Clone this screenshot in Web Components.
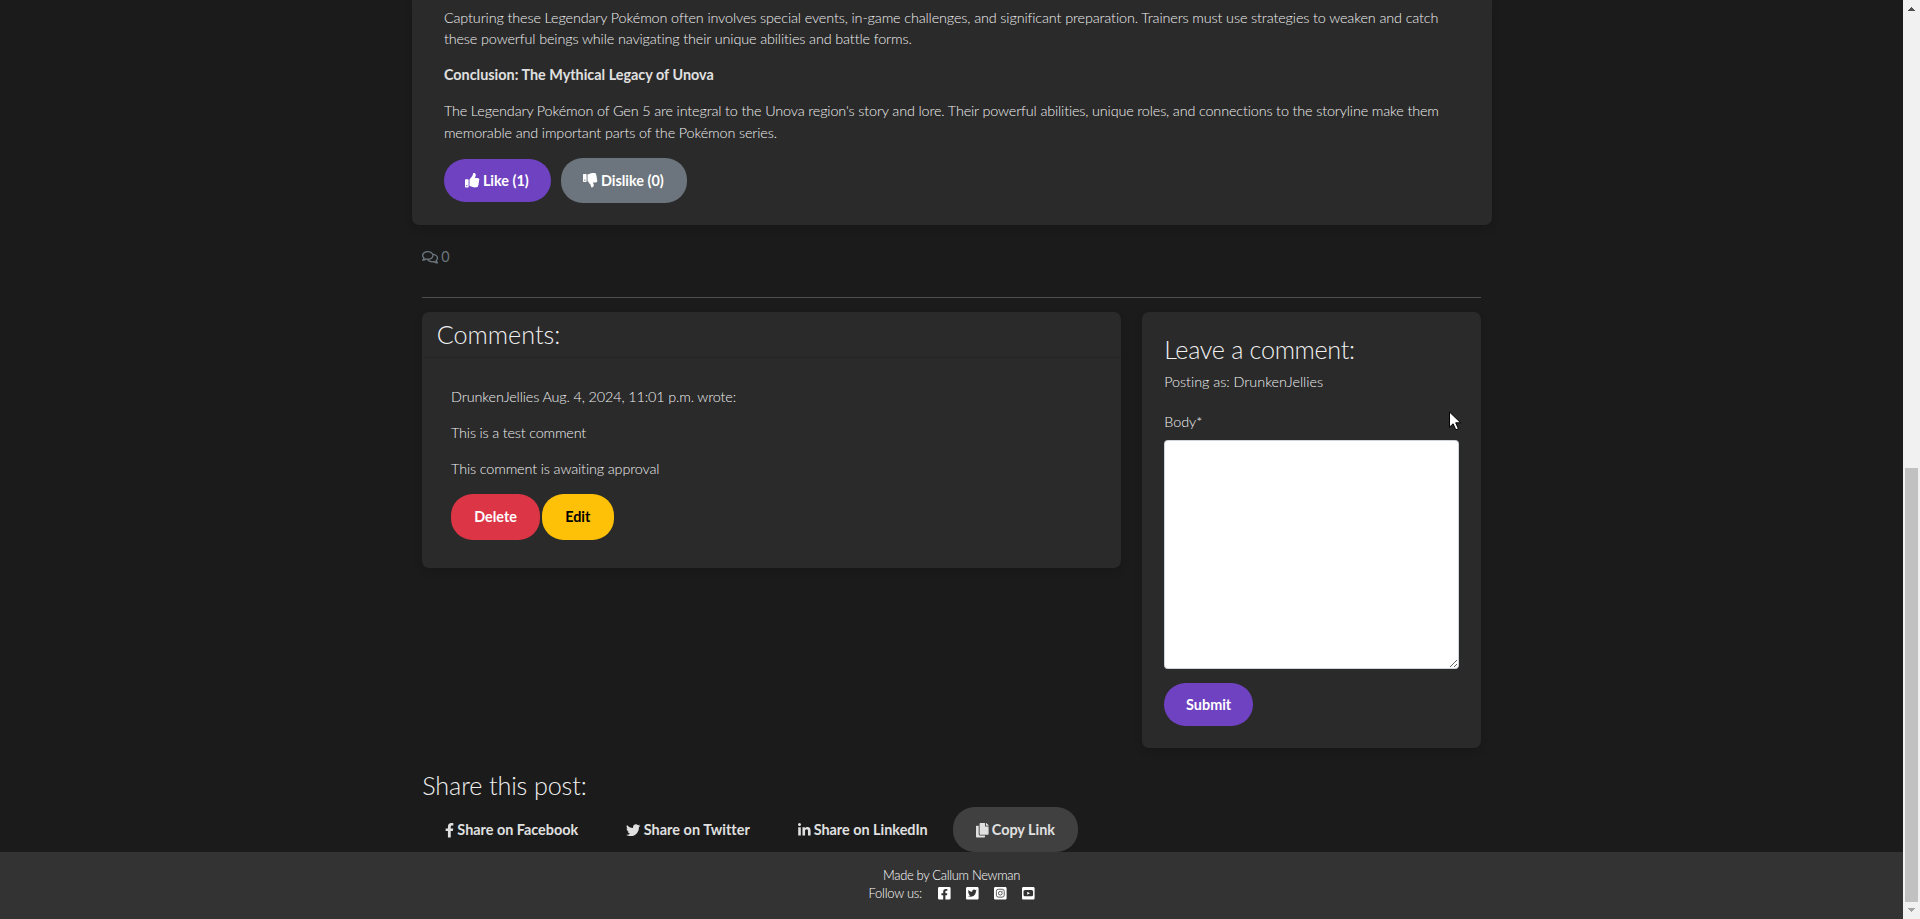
<!DOCTYPE html>
<html lang="en">
<head>
<meta charset="utf-8">
<title>Blog post</title>
<style>
html{font-size:14.4px}
body{margin:0;height:919px;overflow:hidden;background:#1b1b1b;color:#f0f0f0;font:300 14.4px/21.6px Lato,"Liberation Sans",sans-serif}
</style>
</head>
<body>
<blog-page></blog-page>
<script>
const square = 'M400 32H48C21.5 32 0 53.5 0 80v352c0 26.5 21.5 48 48 48h352c26.5 0 48-21.5 48-48V80c0-26.5-21.5-48-48-48z';
const ICONS = {
  up:[512,'M104 224H24c-13.255 0-24 10.745-24 24v240c0 13.255 10.745 24 24 24h80c13.255 0 24-10.745 24-24V248c0-13.255-10.745-24-24-24zM64 472c-13.255 0-24-10.745-24-24s10.745-24 24-24 24 10.745 24 24-10.745 24-24 24zM384 81.452c0 42.416-25.97 66.208-33.277 94.548h101.723c33.397 0 59.397 27.746 59.553 58.098.084 17.938-7.546 37.249-19.439 49.197l-.11.11c9.836 23.337 8.237 56.037-9.308 79.469 8.681 25.895-.069 57.704-16.382 74.757 4.298 17.598 2.244 32.575-6.148 44.632C440.202 511.587 389.616 512 346.839 512l-2.845-.001c-48.287-.017-87.806-17.598-119.56-31.725-15.957-7.099-36.821-15.887-52.651-16.178-6.54-.12-11.783-5.457-11.783-11.998v-213.77c0-3.2 1.282-6.271 3.558-8.521 39.614-39.144 56.648-80.587 89.117-113.111 14.804-14.832 20.188-37.236 25.393-58.902C282.515 39.293 291.817 0 312 0c24 0 72 8 72 81.452z'],
  down:[512,'M0 56v240c0 13.255 10.745 24 24 24h80c13.255 0 24-10.745 24-24V56c0-13.255-10.745-24-24-24H24C10.745 32 0 42.745 0 56zm40 200c0-13.255 10.745-24 24-24s24 10.745 24 24-10.745 24-24 24-24-10.745-24-24zm272 256c-20.183 0-29.485-39.293-33.931-57.795-5.206-21.666-10.589-44.07-25.393-58.902-32.469-32.524-49.503-73.967-89.117-113.111a11.98 11.98 0 0 1-3.558-8.521V59.901c0-6.541 5.243-11.878 11.783-11.998 15.831-.29 36.694-9.079 52.651-16.178C256.189 17.598 295.709.017 343.995 0h2.844c42.777 0 93.363.413 113.774 29.737 8.392 12.057 10.446 27.034 6.148 44.632 16.312 17.053 25.063 48.863 16.382 74.757 17.544 23.432 19.143 56.132 9.308 79.469l.11.11c11.893 11.949 19.523 31.259 19.439 49.197-.156 30.352-26.157 58.098-59.553 58.098H350.723C358.03 364.34 384 388.132 384 430.548 384 504 336 512 312 512z'],
  comments:[576,'M532 386.2c27.5-27.1 44-61.1 44-98.2 0-80-76.5-146.1-176.2-157.9C368.3 72.5 294.3 32 208 32 93.1 32 0 103.6 0 192c0 37 16.5 71 44 98.2-15.3 30.7-37.3 54.5-37.7 54.9-6.3 6.7-8.1 16.5-4.4 25 3.6 8.5 12 14 21.2 14 53.5 0 96.7-20.2 125.2-38.8 9.2 2.1 18.7 3.7 28.4 4.9C208.1 407.6 281.8 448 368 448c20.8 0 40.8-2.4 59.8-6.8C456.3 459.7 499.4 480 553 480c9.2 0 17.5-5.5 21.2-14 3.6-8.5 1.9-18.3-4.4-25-.4-.3-22.5-24.1-37.8-54.8zm-392.8-92.3L122.1 305c-14.1 9.1-28.5 16.3-43.1 21.4 2.7-4.7 5.4-9.7 8-14.8l15.5-31.1L77.7 256C64.2 242.6 48 220.7 48 192c0-60.7 73.3-112 160-112s160 51.3 160 112-73.3 112-160 112c-16.5 0-33-1.9-49-5.6l-19.8-4.5zM498.3 352l-24.7 24.4 15.5 31.1c2.6 5.1 5.3 10.1 8 14.8-14.6-5.1-29-12.3-43.1-21.4l-17.1-11.1-19.9 4.6c-16 3.7-32.5 5.6-49 5.6-54 0-102.2-20.1-131.3-49.7C338 339.5 416 272.9 416 192c0-3.4-.4-6.7-.7-10C479.7 196.5 528 238.8 528 288c0 28.7-16.2 50.6-29.7 64z'],
  facebook:[320,'M279.14 288l14.22-92.66h-88.91v-60.13c0-25.35 12.42-50.06 52.24-50.06h40.42V6.26S260.43 0 225.36 0c-73.22 0-121.08 44.38-121.08 124.72v70.62H22.89V288h81.39v224h100.17V288z'],
  twitter:[512,'M459.37 151.716c.325 4.548.325 9.097.325 13.645 0 138.72-105.583 298.558-298.558 298.558-59.452 0-114.68-17.219-161.137-47.106 8.447.974 16.568 1.299 25.34 1.299 49.055 0 94.213-16.568 130.274-44.832-46.132-.975-84.792-31.188-98.112-72.772 6.498.974 12.995 1.624 19.818 1.624 9.421 0 18.843-1.3 27.614-3.573-48.081-9.747-84.143-51.98-84.143-102.985v-1.299c13.969 7.797 30.214 12.67 47.431 13.319-28.264-18.843-46.781-51.005-46.781-87.391 0-19.492 5.197-37.36 14.294-52.954 51.655 63.675 129.3 105.258 216.365 109.807-1.624-7.797-2.599-15.918-2.599-24.04 0-57.828 46.782-104.934 104.934-104.934 30.213 0 57.502 12.67 76.67 33.137 23.715-4.548 46.456-13.32 66.599-25.34-7.798 24.366-24.366 44.833-46.132 57.827 21.117-2.273 41.584-8.122 60.426-16.243-14.292 20.791-32.161 39.308-52.628 54.253z'],
  linkedin:[448,'M100.28 448H7.4V148.9h92.88zM53.79 108.1C24.09 108.1 0 83.5 0 53.8a53.79 53.79 0 0 1 107.58 0c0 29.7-24.1 54.3-53.79 54.3zM447.9 448h-92.68V302.4c0-34.7-.7-79.2-48.29-79.2-48.29 0-55.69 37.7-55.69 76.7V448h-92.78V148.9h89.08v40.8h1.3c12.4-23.5 42.69-48.3 87.88-48.3 94 0 111.28 61.9 111.28 142.3V448z'],
  copy:[448,'M320 448v40c0 13.255-10.745 24-24 24H24c-13.255 0-24-10.745-24-24V120c0-13.255 10.745-24 24-24h72v296c0 30.879 25.121 56 56 56h168zm0-344V0H152c-13.255 0-24 10.745-24 24v368c0 13.255 10.745 24 24 24h272c13.255 0 24-10.745 24-24V128H344c-13.2 0-24-10.8-24-24zm120.971-31.029L375.029 7.029A24 24 0 0 0 358.059 0H352v96h96v-6.059a24 24 0 0 0-7.029-16.97z'],
  fbsq:[448,'M400 32H48A48 48 0 0 0 0 80v352a48 48 0 0 0 48 48h137.25V327.69h-63V256h63v-54.64c0-62.15 37-96.48 93.67-96.48 27.14 0 55.52 4.84 55.52 4.84v61h-31.27c-30.81 0-40.42 19.12-40.42 38.73V256h68.78l-11 71.69h-57.78V480H400a48 48 0 0 0 48-48V80a48 48 0 0 0-48-48z'],
  twsq:[448,'M400 32H48C21.5 32 0 53.5 0 80v352c0 26.5 21.5 48 48 48h352c26.5 0 48-21.5 48-48V80c0-26.5-21.5-48-48-48zm-48.9 158.8c.2 2.8.2 5.7.2 8.5 0 86.7-66 186.6-186.6 186.6-37.2 0-71.7-10.8-100.7-29.4 5.3.6 10.4.8 15.8.8 30.7 0 58.9-10.4 81.4-28-28.8-.6-53-19.5-61.3-45.5 10.1 1.5 19.2 1.5 29.6-1.2-30-6.1-52.5-32.5-52.5-64.4v-.8c8.7 4.9 18.9 7.9 29.6 8.3a65.447 65.447 0 0 1-29.2-54.6c0-12.2 3.2-23.4 8.9-33.1 32.3 39.8 80.8 65.8 135.2 68.6-9.3-44.5 24-80.6 64-80.6 18.9 0 35.9 7.9 47.9 20.7 14.8-2.8 29-8.3 41.6-15.8-4.9 15.2-15.2 28-28.8 36.1 13.2-1.4 26-5.1 37.8-10.2-8.9 13.1-20.1 24.7-32.9 34z'],
  igsq:[448,square,'<g fill="none" stroke="#333" stroke-width="28"><rect x="84" y="116" width="280" height="280" rx="72"/><circle cx="224" cy="256" r="66"/></g><circle cx="298" cy="182" r="17" fill="#333"/>'],
  ytsq:[448,square,'<rect x="54" y="144" width="340" height="224" rx="54" fill="#333"/><path fill="currentColor" d="M186 202l96 54-96 54z"/>']
};
const define = (name, css, html) => customElements.define(name, class extends HTMLElement {
  constructor(){
    super();
    this.attachShadow({mode:'open'}).innerHTML = '<style>'+css+'</style>'+(typeof html === 'function' ? html(this) : html);
  }
});

define('fa-icon', ':host{display:inline-block;height:1em;line-height:1;vertical-align:-.125em}svg{display:block;height:1em;overflow:visible}', el => {
  const [w, d, extra = ''] = ICONS[el.getAttribute('name')];
  return `<svg viewBox="0 0 ${w} 512" style="width:${w/512}em"><path fill="currentColor" d="${d}"/>${extra}</svg>`;
});

define('pill-button', `
:host{display:inline-block;box-sizing:border-box;border:1px solid transparent;border-radius:21.6px;padding:10.8px 0;text-align:center;font-weight:700;line-height:21.6px;color:#fff;white-space:nowrap;width:var(--w);letter-spacing:var(--ls,0)}
:host([kind=primary]){background:#6f42c1;border:0}
:host([kind=secondary]){background:#6c757d}
:host([kind=danger]){background:#dc3545}
:host([kind=warning]){background:#ffc107;color:#000}
:host([kind=share]){color:#e0e0e0;padding:11.5px 0 10.1px}
:host([active]){background:#404040}`, '<slot></slot>');

define('dark-card', `
:host{display:block;box-sizing:border-box;background:#2a2a2a;border-radius:7.2px;box-shadow:0 4px 8px rgba(0,0,0,.12)}`, '<slot name="header"></slot><slot></slot>');

define('section-title', `:host{display:block;font-size:25.2px;line-height:30.24px;font-weight:300}`, '<slot></slot>');

define('post-article', `
:host{display:block}
dark-card{padding:6.8px 32.4px 22px;border-radius:0 0 7.2px 7.2px}
p{margin:0 0 14.4px;white-space:nowrap}
p:last-of-type{margin-bottom:14.8px}
b{font-weight:700;color:#e0e0e0}
.row{display:flex;align-items:center;gap:10px;height:44.3px}`, `
<dark-card>
<p><span style="letter-spacing:-.125px">Capturing these Legendary Pokémon often involves special events, in-game challenges, and significant preparation. Trainers must use strategies to weaken and catch</span><br><span style="letter-spacing:-.124px">these powerful beings while navigating their unique abilities and battle forms.</span></p>
<p><b>Conclusion: The Mythical Legacy of Unova</b></p>
<p><span style="letter-spacing:-.147px">The Legendary Pokémon of Gen 5 are integral to the Unova region's story and lore. Their powerful abilities, unique roles, and connections to the storyline make them</span><br><span style="letter-spacing:-.135px">memorable and important parts of the Pokémon series.</span></p>
<div class="row"><pill-button kind="primary" style="--w:107px"><span style="margin-right:1px"><fa-icon name="up"></fa-icon> Like (1)</span></pill-button><pill-button kind="secondary" style="--w:126px"><span style="margin-right:1px"><fa-icon name="down"></fa-icon> Dislike (0)</span></pill-button></div>
</dark-card>`);

define('comment-count', `
:host{display:block;margin:0 10.8px;padding:21.6px 0 28.8px;height:21.6px;color:#6c757d;border-bottom:1px solid #4e4e4e;font-weight:400;word-spacing:-.9px}`, '<fa-icon name="comments"></fa-icon> 0');

define('comment-list', `
:host{display:block}
header{padding:7.2px 14.4px;border-bottom:1px solid #252525}
.body{padding:28.8px}
p{margin:0 0 14.4px;letter-spacing:-.13px}
.row{display:flex;gap:1.7px}`, `
<dark-card>
<header slot="header"><section-title>Comments:</section-title></header>
<div class="body"><p>DrunkenJellies Aug. 4, 2024, 11:01 p.m. wrote:</p><p style="letter-spacing:-.18px">This is a test comment</p><p>This comment is awaiting approval</p>
<div class="row"><pill-button kind="danger" style="--w:89px">Delete</pill-button><pill-button kind="warning" style="--w:72px">Edit</pill-button></div></div>
</dark-card>`);

define('comment-form', `
:host{display:block}
dark-card{padding:21.6px 21.9px 21.6px}
section-title{margin-bottom:7.2px;letter-spacing:-.32px}
label{display:block;margin:18px 0 8.2px}
textarea{display:block;box-sizing:border-box;width:100%;height:229px;border:1px solid #ced4da;border-radius:3.6px;background:#fff;margin:0 0 13.4px;resize:vertical}
pill-button{display:block}`, `
<dark-card><section-title>Leave a comment:</section-title><div style="letter-spacing:-.03px">Posting as: DrunkenJellies</div>
<label>Body*</label><textarea></textarea>
<pill-button kind="primary" style="--w:89px">Submit</pill-button></dark-card>`);

define('share-bar', `
:host{display:block;margin:22.4px 10.8px 0}
section-title{margin-bottom:6.4px;letter-spacing:-.13px}
.row{display:flex;gap:2.8px}`, `
<section-title>Share this post:</section-title>
<div class="row"><pill-button kind="share" style="--w:178.4px"><fa-icon name="facebook"></fa-icon> Share on Facebook</pill-button><pill-button kind="share" style="--w:168.7px;--ls:.05px"><fa-icon name="twitter"></fa-icon> Share on Twitter</pill-button><pill-button kind="share" style="--w:175.3px"><fa-icon name="linkedin"></fa-icon> Share on LinkedIn</pill-button><pill-button kind="share" active style="--w:124.6px"><fa-icon name="copy"></fa-icon> Copy Link</pill-button></div>`);

define('page-footer', `
:host{display:block;background:#333;color:#fff;text-align:center;font-size:12.96px;line-height:18px;padding-top:14px;box-sizing:border-box}
.made{letter-spacing:-.32px}
.follow{display:flex;justify-content:center;align-items:center}
.follow span{margin-right:16px;letter-spacing:-.22px}
.icons{display:flex;gap:15.4px;font-size:14.4px}`, `
<div class="made">Made by Callum Newman</div>
<div class="follow"><span>Follow us:</span><div class="icons"><fa-icon name="fbsq"></fa-icon><fa-icon name="twsq"></fa-icon><fa-icon name="igsq"></fa-icon><fa-icon name="ytsq"></fa-icon></div></div>`);

define('scroll-track', `
:host{display:flex;flex-direction:column;align-items:center;background:#f1f1f1;padding:7px 0;box-sizing:border-box}
svg{display:block}
.thumb{width:13px;height:434px;background:#c1c1c1;margin:auto 0 6px}`, `
<svg width="7" height="4" shape-rendering="crispEdges"><path fill="#505050" d="M3 0h1v1h1v1h1v1h1v1H0V3h1V2h1V1h1z"/></svg>
<div class="thumb"></div>
<svg width="7" height="4" shape-rendering="crispEdges"><path fill="#a3a3a3" d="M0 0h7v1H6v1H5v1H4v1H3V3H2V2H1V1H0z"/></svg>`);

define('mouse-pointer', `:host{position:absolute;left:1449px;top:411px}svg{display:block}`, `
<svg width="13" height="20" viewBox="0 0 13 20"><path d="M.5 1v15.2l3.6-3.4 2.7 6 2.6-1.1-2.7-5.9h5z" fill="#fff" stroke="#000"/></svg>`);

define('blog-page', `
:host{display:grid;grid-template-columns:1fr 17px;height:919px}
.view{display:flex;flex-direction:column;min-width:0}
main{width:1080px;margin:0 auto;height:852px;flex:none}
.cols{display:grid;grid-template-columns:698.4px 338.4px;gap:21.6px;align-items:start;margin:14.4px 10.8px 0}
page-footer{flex:1}`, `
<div class="view"><main><post-article></post-article><comment-count></comment-count>
<div class="cols"><comment-list></comment-list><comment-form></comment-form></div>
<share-bar></share-bar></main><page-footer></page-footer></div>
<scroll-track></scroll-track><mouse-pointer></mouse-pointer>`);
</script>
</body>
</html>
